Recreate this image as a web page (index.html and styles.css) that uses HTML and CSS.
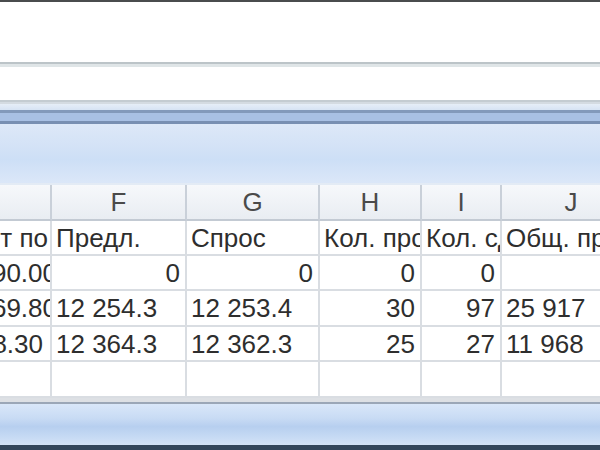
FILE: index.html
```html
<!DOCTYPE html>
<html lang="ru">
<head>
<meta charset="utf-8">
<title>Лист</title>
<link rel="stylesheet" href="styles.css">
</head>
<body>
<div class="window">
  <div class="topbar"></div>
  <div class="pane pane-a"></div>
  <div class="sep sep-a"></div>
  <div class="pane pane-b"></div>
  <div class="sep sep-b"></div>
  <div class="blue-top"></div>
  <div class="band"></div>
  <div class="blue-area"></div>
  <div class="hdr-line"></div>
  <div class="sheet">
    <div class="grid">
      <div class="ch"></div>
      <div class="ch">F</div>
      <div class="ch">G</div>
      <div class="ch">H</div>
      <div class="ch">I</div>
      <div class="ch">J</div>

      <div class="c clip"><span>Расчёт по</span></div>
      <div class="c"><span>Предл.</span></div>
      <div class="c"><span>Спрос</span></div>
      <div class="c"><span>Кол. прод.</span></div>
      <div class="c"><span>Кол. сделок</span></div>
      <div class="c"><span>Общ. прибыль</span></div>

      <div class="c clip cut"><span>1 190.00</span></div>
      <div class="c num"><span>0</span></div>
      <div class="c num"><span>0</span></div>
      <div class="c num"><span>0</span></div>
      <div class="c num"><span>0</span></div>
      <div class="c"></div>

      <div class="c clip cut"><span>1 369.80</span></div>
      <div class="c"><span>12 254.3</span></div>
      <div class="c"><span>12 253.4</span></div>
      <div class="c num"><span>30</span></div>
      <div class="c num"><span>97</span></div>
      <div class="c"><span>25 917</span></div>

      <div class="c num clip"><span>1 378.30</span></div>
      <div class="c"><span>12 364.3</span></div>
      <div class="c"><span>12 362.3</span></div>
      <div class="c num"><span>25</span></div>
      <div class="c num"><span>27</span></div>
      <div class="c"><span>11 968</span></div>

      <div class="c"></div>
      <div class="c"></div>
      <div class="c"></div>
      <div class="c"></div>
      <div class="c"></div>
      <div class="c"></div>
    </div>
  </div>
  <div class="foot-grey"></div>
  <div class="foot-line"></div>
  <div class="foot-blue"></div>
  <div class="foot-dark"></div>
</div>
</body>
</html>
```

FILE: styles.css
```css
html, body {
  margin: 0;
  padding: 0;
  width: 600px;
  height: 450px;
  overflow: hidden;
  background: #ffffff;
}

.window {
  display: flex;
  flex-direction: column;
  width: 600px;
  height: 450px;
  overflow: hidden;
  font-family: "Liberation Sans", Arial, sans-serif;
}

.topbar {
  height: 2px;
  background: #4a4c4e;
  flex: none;
}

.pane {
  background: #ffffff;
  flex: none;
}
.pane-a { height: 60px; }
.pane-b { height: 33px; }

.sep { flex: none; }
.sep-a {
  height: 3px;
  border-top: 2px solid #bcc4c8;
  background: #dfe5e7;
}
.sep-b {
  height: 2px;
  border-top: 2px solid #c4ccd2;
  background: #d4dbe2;
}

.blue-top {
  height: 6px;
  flex: none;
  background: linear-gradient(#e6eef8, #d6e3f4);
}

.band {
  height: 8px;
  flex: none;
  border-top: 3px solid #8299bb;
  border-bottom: 3px solid #788fb2;
  background: #a8c0e4;
}

.blue-area {
  height: 59px;
  flex: none;
  background: linear-gradient(#dde8f8 0%, #d3e2f6 40%, #cddff6 60%, #dbe7f8 100%);
}

.hdr-line {
  height: 2px;
  flex: none;
  background: #e3ebf5;
}

.sheet {
  height: 213px;
  flex: none;
  overflow: hidden;
  background: #ffffff;
}

.grid {
  display: grid;
  grid-template-columns: 52px 135px 133px 102px 80px 140px;
  grid-template-rows: 36px 35px 35px 36px 35px 36px;
  width: 642px;
}

.ch {
  display: flex;
  align-items: center;
  justify-content: center;
  background: linear-gradient(#f6f8fb, #e9edf2);
  border-right: 2px solid #c9d0d9;
  border-bottom: 2px solid #c3cad3;
  color: #4a4a4a;
  font-size: 26px;
  line-height: 1;
  overflow: hidden;
}

.c {
  display: flex;
  align-items: center;
  justify-content: flex-start;
  padding: 0 5px 0 4px;
  border-right: 2px solid #d9dde2;
  border-bottom: 2px solid #d9dde2;
  color: #2e2e2e;
  font-size: 26px;
  line-height: 1;
  white-space: nowrap;
  overflow: hidden;
  min-width: 0;
}

.c span {
  flex: none;
  white-space: nowrap;
}

.num {
  justify-content: flex-end;
}

.clip {
  justify-content: flex-end;
  padding-right: 2px;
}

.clip.num {
  padding-right: 7px;
}

.cut span {
  margin-right: -9px;
}

.foot-grey {
  height: 4px;
  flex: none;
  background: #dde0e4;
}

.foot-line {
  height: 2px;
  flex: none;
  background: #9ba7b7;
}

.foot-blue {
  height: 41px;
  flex: none;
  background: linear-gradient(#d9e7f9 0%, #c8dbf4 35%, #b7cfef 55%, #c6daf4 80%, #d4e3f7 100%);
}

.foot-dark {
  height: 5px;
  flex: none;
  background: #34475c;
}
```
